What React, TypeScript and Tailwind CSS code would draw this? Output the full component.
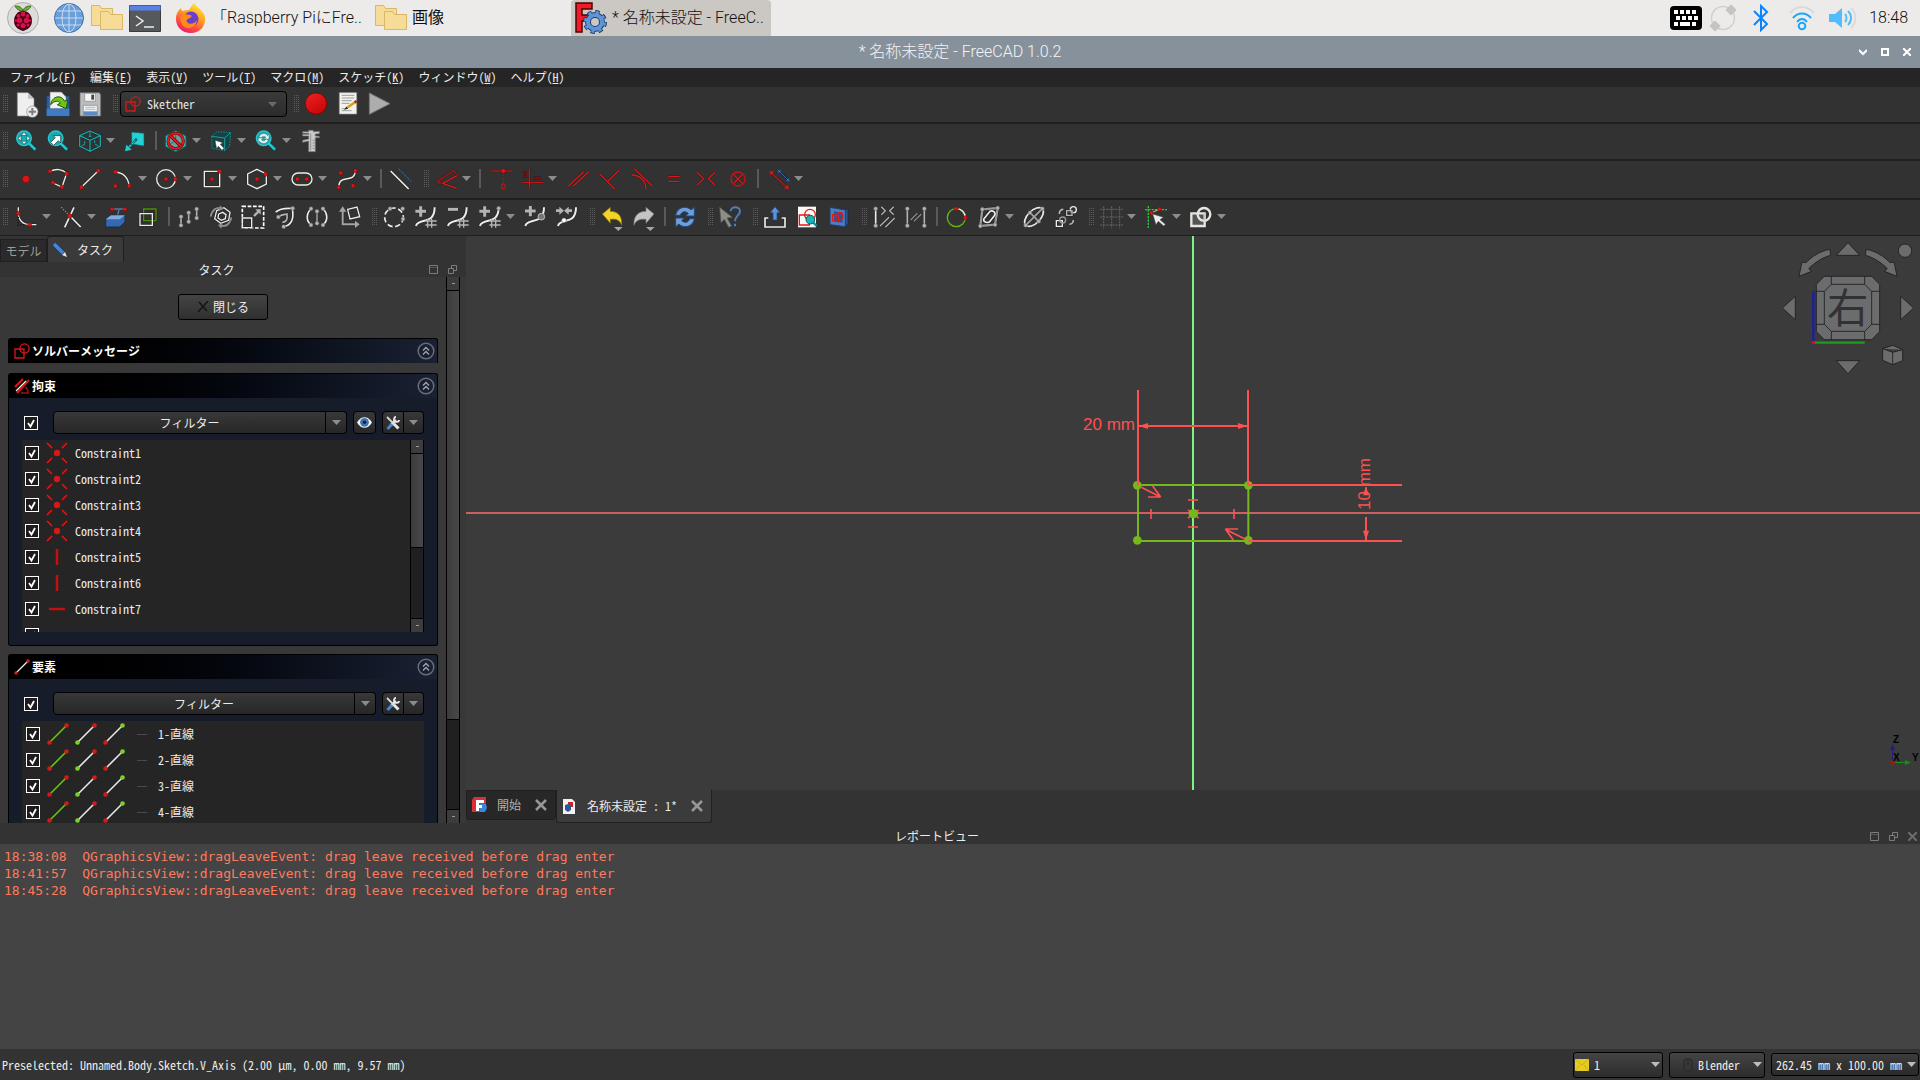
import type { ReactNode } from "react";

const RED = "#d81818";
const PALE = "#ecece8";
const GREY = "#b4b4b4";
const CYAN = "#22ccd2";

/* ---------- drawing helpers (96 units = 32 px) ---------- */

function Glyph({ x, y, children }: { x: number; y: number; children: ReactNode }) {
  return (
    <svg className="size-8 shrink-0" viewBox={`${x - 48} ${y - 48} 96 96`} fill="none" aria-hidden="true">
      {children}
    </svg>
  );
}

function L({ d, c = PALE, w = 4, dash }: { d: string; c?: string; w?: number; dash?: string }) {
  return (
    <>
      <path d={d} stroke="#161616" strokeWidth={w + 3} strokeOpacity={0.55} strokeDasharray={dash} />
      <path d={d} stroke={c} strokeWidth={w} strokeDasharray={dash} />
    </>
  );
}

function Dot({ x, y, c = RED, r = 6 }: { x: number; y: number; c?: string; r?: number }) {
  return <circle cx={x} cy={y} r={r} fill={c} stroke={c === RED ? "#6d0606" : "#555"} strokeWidth={1.5} />;
}

function Dots({ at, c, r }: { at: [number, number][]; c?: string; r?: number }) {
  return (
    <>
      {at.map(([x, y]) => (
        <Dot key={`${x}-${y}`} x={x} y={y} c={c} r={r} />
      ))}
    </>
  );
}

/* ---------- toolbar parts ---------- */

function Triangle({ className = "text-[#8c8c8c]" }: { className?: string }) {
  return (
    <svg className={`h-[5px] w-[9px] shrink-0 ${className}`} viewBox="0 0 9 5" fill="currentColor" aria-hidden="true">
      <path d="M0 0h9L4.5 5z" />
    </svg>
  );
}

function Tool({ label, menu = false, children }: { label: string; menu?: boolean; children: ReactNode }) {
  return (
    <div className="flex items-center">
      <button aria-label={label} className="size-8">
        {children}
      </button>
      {menu && (
        <button aria-label={`${label} メニュー`} className="flex h-8 w-[13px] items-center">
          <Triangle />
        </button>
      )}
    </div>
  );
}

function Grip({ first = false }: { first?: boolean }) {
  return (
    <div className={first ? "flex w-[10px] justify-end pr-px" : "flex w-[13px] justify-end"}>
      <svg className="h-[18px] w-[6px]" viewBox="0 0 6 18" stroke="#5c5c5c" strokeDasharray="1 1" aria-hidden="true">
        <path d="M.5 0v18M2.5 0v18M4.5 0v18" />
      </svg>
    </div>
  );
}

function Divider() {
  return (
    <div className="flex w-[9px] justify-center">
      <div className="h-[19px] w-[2px] bg-[#5a5a5a]" />
    </div>
  );
}

/* ---------- file and macro toolbar ---------- */

function NewDocIcon() {
  return (
    <Glyph x={48} y={48}>
      <path d="M22 14h32l18 18v52H22z" fill="#efefef" stroke="#8a8a8a" strokeWidth={2} />
      <path d="M54 14v18h18z" fill="#c2c2c2" />
      <circle cx={67} cy={71} r={17} fill="#ededed" stroke="#8a8a8a" strokeWidth={2} />
      <path d="M67 60v22M56 71h22" stroke="#7d7d7d" strokeWidth={6} />
    </Glyph>
  );
}

function OpenIcon() {
  return (
    <Glyph x={48} y={48}>
      <path d="M14 24h68v60H14z" fill="#2c5f9e" stroke="#1c3f6e" strokeWidth={2} />
      <path d="M24 62V12h34l14 14v36z" fill="#f0f0f0" stroke="#777" strokeWidth={2} />
      <path d="M14 62h68v22H14z" fill="#3f7bc4" />
      <path d="M26 50c4-26 32-32 42-10l10-4-6 26-26-12 9-4c-6-10-18-8-29 4z" fill="#6cc516" stroke="#22520a" strokeWidth={3} />
    </Glyph>
  );
}

function SaveIcon() {
  return (
    <Glyph x={48} y={48}>
      <path d="M18 14h58l4 6v64H18z" fill="#bcbcbc" stroke="#6a6a6a" strokeWidth={2} />
      <path d="M32 16h32v24H32z" fill="#f4f4f4" stroke="#888" strokeWidth={2} />
      <path d="M52 20h8v15h-8z" fill="#444" />
      <path d="M28 52h42v28H28z" fill="#eef2f8" stroke="#888" strokeWidth={2} />
      <path d="M28 70h42v12H28z" fill="#5b8cc8" />
      <path d="M34 58h30M34 64h30" stroke="#999" strokeWidth={2} />
    </Glyph>
  );
}

function SketcherIcon({ className }: { className: string }) {
  return (
    <svg className={className} viewBox="0 0 16 16" fill="none" stroke="#d81818" strokeWidth={1.3} aria-hidden="true">
      <path d="M1 6h9v9H1z" />
      <circle cx={10.5} cy={5.5} r={4.6} />
    </svg>
  );
}

function RecordIcon() {
  return (
    <Glyph x={48} y={48}>
      <defs>
        <linearGradient id="record" x1="0.2" y1="0" x2="0.8" y2="1">
          <stop offset="0" stopColor="#ee2020" />
          <stop offset="1" stopColor="#c40404" />
        </linearGradient>
      </defs>
      <circle cx={48} cy={47} r={32} fill="url(#record)" stroke="#6d0000" strokeWidth={2} />
    </Glyph>
  );
}

function MacroIcon() {
  return (
    <Glyph x={48} y={48}>
      <path d="M22 14h52v64H22z" fill="#f2f2ee" stroke="#9a9a9a" strokeWidth={2} />
      <path d="M29 22h38M29 30h38M29 38h30M29 46h24M29 62h12M29 68h30" stroke="#9d9d9d" strokeWidth={3} />
      <path d="M44 60l26-18" stroke="#d9a015" strokeWidth={8} />
      <path d="M36 65l12-3-5-6z" fill="#222" />
      <path d="M68 43l6-4" stroke="#b02020" strokeWidth={8} />
    </Glyph>
  );
}

function PlayIcon() {
  return (
    <Glyph x={48} y={48}>
      <path d="M16 15l62 32-62 32z" fill="#adadad" stroke="#747474" strokeWidth={3} />
    </Glyph>
  );
}

function FileToolbar() {
  return (
    <div className="flex h-[37px] items-center border-b-2 border-[#1f1f1f] pb-px">
      <Grip first />
      <Tool label="新規"><NewDocIcon /></Tool>
      <Tool label="開く"><OpenIcon /></Tool>
      <Tool label="保存"><SaveIcon /></Tool>
      <Grip />
      <div className="ml-px grid h-[26px] w-[167px] items-center">
        <select
          aria-label="ワークベンチ"
          className="col-start-1 row-start-1 h-[26px] w-full appearance-none rounded-sm border border-black bg-gradient-to-b from-[#3a3a3a] to-[#2c2c2c] pl-[26px] text-[#e6e6e6]"
        >
          <option>Sketcher</option>
        </select>
        <div className="pointer-events-none col-start-1 row-start-1 flex items-center justify-between pr-[10px] pl-[5px]">
          <SketcherIcon className="size-4" />
          <Triangle className="text-[#6a6a6a]" />
        </div>
      </div>
      <Grip />
      <Tool label="マクロを記録"><RecordIcon /></Tool>
      <Tool label="マクロ"><MacroIcon /></Tool>
      <Tool label="マクロを実行"><PlayIcon /></Tool>
    </div>
  );
}

/* ---------- view toolbar ---------- */

function Lens({ x, y }: { x: number; y: number }) {
  return (
    <>
      <path d={`M${x + 15} ${y + 15}l20 20`} stroke="#0a5053" strokeWidth={11} />
      <path d={`M${x + 15} ${y + 15}l19 19`} stroke={CYAN} strokeWidth={7} />
      <circle cx={x} cy={y} r={22} fill="#1aa9ae" stroke={CYAN} strokeWidth={4} />
    </>
  );
}

function ViewToolbar() {
  return (
    <div className="flex h-[37px] items-center border-b-2 border-[#1f1f1f] pb-[2px]">
      <Grip first />
      <Tool label="全てにフィット">
        <Glyph x={76} y={62}>
          <Lens x={70} y={54} />
          <path d="M70 36l8 9H62zM70 72l8-9H62zM52 54l9-8v16zM88 54l-9-8v16z" fill="#fff" stroke="#073436" strokeWidth={1.5} />
        </Glyph>
      </Tool>
      <Tool label="選択にフィット">
        <Glyph x={172} y={62}>
          <Lens x={165} y={54} />
          <path d="M150 66l14-14-6-6h22v22l-7-7-14 14z" fill="#fff" stroke="#073436" strokeWidth={2} />
        </Glyph>
      </Tool>
      <Tool label="標準ビュー" menu>
        <Glyph x={270} y={62}>
          <L d="M270 32l31 14v31l-31 16-31-16V46zM239 46l31 14 31-14M270 60v33" c="#18a4a8" />
          <path d="M270 34v14M245 77l10-6M295 77l-10-6M254 62v8M284 60v8M266 48h8" stroke="#18a4a8" strokeWidth={3} />
        </Glyph>
      </Tool>
      <Tool label="リンクに移動">
        <Glyph x={408} y={62}>
          <path d="M398 35l37 4v38l-37-6z" fill="#24d2d6" stroke="#0b6265" strokeWidth={2} />
          <path d="M412 58l-26 26" stroke="#0b6265" strokeWidth={7} />
          <path d="M412 58l-26 26" stroke={CYAN} strokeWidth={4} strokeDasharray="8 3" />
          <path d="M378 93l4-20 16 15z" fill={CYAN} />
          <circle cx={411} cy={58} r={4} fill="#0b6265" />
        </Glyph>
      </Tool>
      <Divider />
      <Tool label="表示スタイル" menu>
        <Glyph x={529} y={62}>
          <path d="M528 31l31 16v31l-31 16-31-16V47z" fill="#25bcc1" stroke="#0b6265" strokeWidth={3} />
          <circle cx={528} cy={62} r={23} fill="#6d9ea0" stroke="#6b0000" strokeWidth={9} />
          <path d="M528 40v22l20 10M528 62l-20 10" stroke="#35686a" strokeWidth={3} />
          <circle cx={528} cy={62} r={23} stroke="#e01919" strokeWidth={6} />
          <path d="M512 46l32 32" stroke="#6b0000" strokeWidth={10} />
          <path d="M512 46l32 32" stroke="#e01919" strokeWidth={6} />
        </Glyph>
      </Tool>
      <Tool label="選択" menu>
        <Glyph x={663} y={62}>
          <path d="M635 48l16-14 41 3-3 40-15 14-38-7z" fill="#174244" stroke="#15898d" strokeWidth={3} strokeDasharray="5 3" />
          <path d="M635 48l39 5 18-16M674 53v38" stroke="#1a9ea3" strokeWidth={3} />
          <path d="M645 60l24 7-8 5 11 12-6 6-11-12-5 8z" fill="#fff" stroke="#333" strokeWidth={1.5} />
        </Glyph>
      </Tool>
      <Tool label="ビューの同期" menu>
        <Glyph x={797} y={62}>
          <Lens x={790} y={54} />
          <path d="M776 50c4-12 20-14 26-4l4-4v14h-14l5-5c-5-6-12-4-14 2zM804 59c-4 12-20 14-26 4l-4 4V53h14l-5 5c5 6 12 4 14-2z" fill="#e9f4f4" stroke="#1c5c5e" strokeWidth={1} />
        </Glyph>
      </Tool>
      <Tool label="測定">
        <Glyph x={933} y={62}>
          <path d="M908 34h18v-4h14v4l18-1v7l-12 1v6l12 1v4h-12v42h-20V62l-18 4v-6l18-4v-9h-18v-5h18v-3h-18z" fill="#c9c9c9" stroke="#6e6e6e" strokeWidth={2} />
          <path d="M932 40v50M938 60h6M938 68h6M938 76h6M938 84h6" stroke="#777" strokeWidth={2} />
        </Glyph>
      </Tool>
    </div>
  );
}

/* ---------- geometry and constraint toolbar ---------- */

function GeometryToolbar() {
  return (
    <div className="flex h-[39px] items-center border-b-2 border-[#1f1f1f] pb-[2px]">
      <Grip first />
      <Tool label="点">
        <Glyph x={78} y={177}><Dot x={78} y={177} r={11} /></Glyph>
      </Tool>
      <Tool label="ポリライン">
        <Glyph x={174} y={177}>
          <L d="M150 154c18-9 38-7 50 6l-14 41-27-12" />
          <Dots at={[[150, 154], [200, 161], [186, 201], [159, 188]]} />
        </Glyph>
      </Tool>
      <Tool label="直線">
        <Glyph x={270} y={177}>
          <L d="M244 202l51-50" />
          <Dots at={[[244, 202], [295, 152]]} />
        </Glyph>
      </Tool>
      <Tool label="円弧" menu>
        <Glyph x={366} y={177}>
          <L d="M346 156c26 2 40 20 41 42" />
          <Dots at={[[346, 156], [346, 198], [387, 198]]} />
        </Glyph>
      </Tool>
      <Tool label="円" menu>
        <Glyph x={501} y={177}>
          <circle cx={498} cy={177} r={28} stroke={PALE} strokeWidth={4} />
          <Dots at={[[498, 177], [526, 177]]} />
        </Glyph>
      </Tool>
      <Tool label="長方形" menu>
        <Glyph x={636} y={177}>
          <L d="M613 154h46v46h-46z" />
          <Dots at={[[636, 177], [659, 154]]} />
        </Glyph>
      </Tool>
      <Tool label="多角形" menu>
        <Glyph x={771} y={177}>
          <L d="M771 148l28 14v30l-28 14-28-14v-30z" />
          <Dots at={[[771, 177], [797, 163]]} />
        </Glyph>
      </Tool>
      <Tool label="長円" menu>
        <Glyph x={906} y={177}>
          <rect x={876} y={159} width={60} height={36} rx={18} stroke={PALE} strokeWidth={4} />
          <Dots at={[[892, 177], [920, 177]]} />
        </Glyph>
      </Tool>
      <Tool label="B-スプライン" menu>
        <Glyph x={1041} y={177}>
          <L d="M1016 200c2-40 48-8 50-46" />
          <Dots at={[[1022, 159], [1066, 152], [1016, 202], [1059, 197]]} />
        </Glyph>
      </Tool>
      <Divider />
      <Tool label="構築ジオメトリー">
        <Glyph x={1203} y={177}>
          <L d="M1172 153l54 54" w={5} />
          <path d="M1196 147l38 38" stroke="#3a76c4" strokeWidth={3} strokeDasharray="8 4" />
        </Glyph>
      </Tool>
      <Grip />
      <Tool label="寸法拘束" menu>
        <Glyph x={48} y={177}>
          <L d="M82 166l-44 24 42 15" c="#e01919" />
          <L d="M24 184l46-32M24 190l8-14M70 150l12 16M20 182l6 8 12-1" c="#a81212" />
        </Glyph>
      </Tool>
      <Divider />
      <Tool label="一致拘束">
        <Glyph x={212} y={177}>
          <L d="M184 153h64" c="#c81414" />
          <Dot x={222} y={153} r={7} />
          <path d="M222 164v26" stroke="#a01010" strokeWidth={4} strokeDasharray="5 5" />
          <path d="M217 192h10v13h-10z" stroke="#c81414" strokeWidth={3} />
        </Glyph>
      </Tool>
      <Tool label="水平/垂直拘束" menu>
        <Glyph x={309} y={177}>
          <L d="M280 188h64M301 146v62" c="#c81414" />
          <L d="M285 156h6v14h-6zM316 172h18v4h-18z" c="#8d0d0d" w={3} />
        </Glyph>
      </Tool>
      <Tool label="平行拘束">
        <Glyph x={444} y={177}><L d="M418 199l46-44M433 199l46-44" c={RED} /></Glyph>
      </Tool>
      <Tool label="直角拘束">
        <Glyph x={540} y={177}><L d="M513 163l44 44M535 185l36-34" c={RED} /></Glyph>
      </Tool>
      <Tool label="正接拘束">
        <Glyph x={636} y={177}>
          <L d="M616 146l54 52" c={RED} />
          <L d="M608 165c24 0 44 18 42 42" c={RED} />
        </Glyph>
      </Tool>
      <Tool label="等値拘束">
        <Glyph x={732} y={177}><L d="M718 170h34M718 184h34" c={RED} /></Glyph>
      </Tool>
      <Tool label="対称拘束">
        <Glyph x={828} y={177}><L d="M804 157l20 19-20 19M858 157l-20 19 20 19" c={RED} /></Glyph>
      </Tool>
      <Tool label="ブロック拘束">
        <Glyph x={924} y={177}>
          <circle cx={927} cy={177} r={21} stroke="#c81414" strokeWidth={4} />
          <L d="M913 163l28 28M941 163l-28 28" c={RED} />
        </Glyph>
      </Tool>
      <Divider />
      <Tool label="拘束の切り替え" menu>
        <Glyph x={1044} y={177}>
          <L d="M1020 154l54 52" c="#c81414" />
          <path d="M1018 152l14 3-10 11zM1077 208l-14-3 10-11z" fill={RED} />
          <L d="M1046 152l30 30" c="#3a68b0" w={3} />
          <path d="M1043 149l11 3-8 8zM1079 185l-11-3 8-8z" fill="#3a68b0" />
        </Glyph>
      </Tool>
    </div>
  );
}

/* ---------- edit toolbar ---------- */

function SpringTool({ x, sign, dot }: { x: number; sign: "+" | "-"; dot?: boolean }) {
  const s = sign === "+" ? `M${x - 32} 274h32M${x - 16} 259v31` : `M${x - 30} 268h30`;
  return (
    <Glyph x={x} y={291}>
      <L d={s} c={GREY} w={9} />
      <L d={`M${x - 30} 318c6-26 56 0 56-56`} w={6} />
      <path d={`M${x + 5} 296v27M${x + 17} 296v27M${x - 2} 303h34M${x - 2} 315h34`} stroke={GREY} strokeWidth={4} />
      {dot && <Dot x={x + 26} y={265} c={GREY} r={6} />}
    </Glyph>
  );
}

function EditToolbar() {
  return (
    <div className="flex h-9 items-center border-b border-[#1f1f1f] pb-[2px]">
      <Grip first />
      <Tool label="フィレット" menu>
        <Glyph x={78} y={291}>
          <L d="M55 262v18c0 20 14 34 34 34h20" />
          <path d="M55 290v28M61 314h18" stroke="#111" strokeWidth={4} strokeDasharray="4 4" />
          <Dots at={[[55, 280], [89, 314]]} />
        </Glyph>
      </Tool>
      <Tool label="トリム" menu>
        <Glyph x={213} y={291}>
          <L d="M222 262l-28 60M210 288l32 33" w={5} />
          <path d="M184 262l22 22" stroke="#999" strokeWidth={4} strokeDasharray="3 5" />
          <Dot x={209} y={288} r={7} />
        </Glyph>
      </Tool>
      <Tool label="外部ジオメトリー">
        <Glyph x={347} y={291}>
          <path d="M316 298l16-12h42v20l-16 15h-42z" fill="#3568ae" stroke="#142b4e" strokeWidth={3} />
          <path d="M316 298l16-12h42l-16 12z" fill="#7eaae2" />
          <path d="M336 267h38M352 284l4-14" stroke="#6b9bd8" strokeWidth={3} />
          <Dots at={[[335, 267], [374, 267]]} />
        </Glyph>
      </Tool>
      <Tool label="カーボンコピー">
        <Glyph x={444} y={291}>
          <L d="M431 267h37v35h-37z" c="#4c9407" />
          <L d="M420 281h37v35h-37z" />
        </Glyph>
      </Tool>
      <Divider />
      <Tool label="移動/配列">
        <Glyph x={567} y={291}>
          <L d="M543 290v26M566 279v26M590 268v26" c={GREY} w={5} />
          <Dots c={GREY} at={[[543, 290], [543, 316], [566, 278], [566, 305], [590, 267], [590, 294]]} />
        </Glyph>
      </Tool>
      <Tool label="回転">
        <Glyph x={663} y={291}>
          <L d="M632 290c4-20 16-30 34-24M694 292c-4 20-16 30-34 24" c="#8e8e8e" w={6} />
          <L d="M650 272l22-9 18 14-4 24-24 9-18-14z" />
          <L d="M656 282l12-5 10 7-2 12-12 5-10-7z" />
          <path d="M660 256l10 11-14 6zM664 326l-10-11 14-6z" fill="#8e8e8e" />
        </Glyph>
      </Tool>
      <Tool label="拡大縮小">
        <Glyph x={759} y={291}>
          <path d="M727 259h64v65h-64z" stroke="#fff" strokeWidth={5} strokeDasharray="11 5" />
          <L d="M727 294h28v29h-28z" />
          <path d="M762 288l14-14" stroke={GREY} strokeWidth={7} />
          <path d="M782 268v16l-16-16z" fill={GREY} />
        </Glyph>
      </Tool>
      <Tool label="オフセット">
        <Glyph x={854} y={291}>
          <L d="M826 276c18-14 34-10 50-11 6 34-4 52-27 55" w={5} />
          <L d="M836 290c10-9 18-6 24-8 2 18-2 24-14 25" c={GREY} w={5} />
          <Dots c={GREY} at={[[877, 265], [834, 291], [850, 320]]} />
        </Glyph>
      </Tool>
      <Tool label="対称">
        <Glyph x={950} y={291}>
          <L d="M936 265c-20 12-20 40-2 50M964 265c20 12 20 40 2 50" w={5} />
          <L d="M950 276v32" c={GREY} />
          <Dots c={GREY} at={[[932, 266], [968, 266], [932, 315], [968, 315], [950, 274], [950, 310]]} />
        </Glyph>
      </Tool>
      <Tool label="軸の整列を削除">
        <Glyph x={1046} y={291}>
          <L d="M1042 268l28-7 8 29-29 7z" />
          <L d="M1027 270v43h40" c="#a4a4a4" w={6} />
          <path d="M1016 275l11-16 11 16zM1064 302l14 11-14 11z" fill="#a4a4a4" />
        </Glyph>
      </Tool>
      <Grip />
      <Tool label="B-スプラインに変換">
        <Glyph x={1181} y={291}>
          <circle cx={1181} cy={292} r={28} stroke={PALE} strokeWidth={5} strokeDasharray="16 8" />
          <Dots c={GREY} at={[[1169, 266], [1207, 266], [1208, 297]]} />
        </Glyph>
      </Tool>
      <Tool label="次数を増やす"><SpringTool x={88} sign="+" /></Tool>
      <Tool label="次数を減らす"><SpringTool x={84} sign="-" /></Tool>
      <Tool label="多重度を増やす" menu><SpringTool x={181} sign="+" dot /></Tool>
      <Tool label="ノットを挿入">
        <Glyph x={315} y={291}>
          <L d="M285 273h32M301 258v31" c={GREY} w={9} />
          <L d="M286 318c6-26 56 0 56-56" w={6} />
          <circle cx={334} cy={290} r={10} fill="#777" stroke="#bbb" strokeWidth={3} />
        </Glyph>
      </Tool>
      <Tool label="曲線を結合">
        <Glyph x={411} y={291}>
          <L d="M384 318c6-26 54 0 54-56" w={6} />
          <path d="M378 268h10v-8l14 12-14 12v-8h-10zM426 268h-10v-8l-14 12 14 12v-8h10z" fill={GREY} />
          <Dot x={402} y={301} c="#fff" r={7} />
        </Glyph>
      </Tool>
      <Grip />
      <Tool label="元に戻す">
        <Glyph x={546} y={291}>
          <path d="M517 282l24-20v12c26 0 36 18 34 42-6-16-16-20-34-18v12z" fill="#f2d32a" stroke="#7d6a00" strokeWidth={2} />
          <path d="M552 321h26l-13 12z" fill="#a6a6a6" />
        </Glyph>
      </Tool>
      <Tool label="やり直す">
        <Glyph x={642} y={291}>
          <path d="M672 282l-24-20v12c-26 0-38 18-36 42 6-16 18-20 36-18v12z" fill="#c4c4c4" stroke="#777" strokeWidth={2} />
          <path d="M648 321h26l-13 12z" fill="#a6a6a6" />
        </Glyph>
      </Tool>
      <Divider />
      <Tool label="更新">
        <Glyph x={765} y={291}>
          <path d="M737 286c4-26 34-30 46-16l10-8v26h-26l8-8c-10-8-20-6-24 6zM793 296c-4 26-34 30-46 16l-10 8v-26h26l-8 8c10 8 20 6 24-6z" fill="#6c9fdc" stroke="#1f4a80" strokeWidth={3} />
        </Glyph>
      </Tool>
      <Grip />
      <Tool label="これは何?">
        <Glyph x={900} y={291}>
          <path d="M869 262l38 30-16 2 14 24-9 4-13-24-10 10z" fill="#8a8f88" stroke="#555" strokeWidth={2} />
          <path d="M902 274c0-16 28-16 28 0 0 12-15 13-15 30M915 311v8" stroke="#4c7fbd" strokeWidth={6} />
        </Glyph>
      </Tool>
      <Grip />
      <Tool label="スケッチを終了">
        <Glyph x={1035} y={291}>
          <L d="M1015 294h-10v27h60v-27h-10" w={5} />
          <path d="M1035 260l15 18h-9v22h-12v-22h-9z" fill="#5d92d6" stroke="#1d4379" strokeWidth={2} />
        </Glyph>
      </Tool>
      <Tool label="スケッチを表示">
        <Glyph x={1131} y={291}>
          <path d="M1104 260h54v62h-54z" fill="#fafafa" />
          <path d="M1108 285h30v30h-30z" stroke="#e01919" strokeWidth={4} />
          <circle cx={1140} cy={284} r={16} stroke="#e01919" strokeWidth={4} />
          <path d="M1148 306l12 12" stroke="#0c8f93" strokeWidth={7} />
          <circle cx={1141} cy={299} r={13} fill="#19b4b8" stroke="#0a5f62" strokeWidth={3} />
        </Glyph>
      </Tool>
      <Tool label="セクションを表示">
        <Glyph x={1227} y={291}>
          <path d="M1214 268h40v44l-10 8-30-6z" fill="#2c5590" stroke="#132c52" strokeWidth={2} />
          <path d="M1200 262l46 8v50l-46-6z" fill="#4b7fc2" stroke="#1d3e70" strokeWidth={3} />
          <path d="M1212 274l26 4v30l-26-4z" fill="#2c5590" />
          <path d="M1208 284l18 3v18l-18-3z" stroke="#e01919" strokeWidth={4} />
          <ellipse cx={1230} cy={288} rx={9} ry={11} stroke="#e01919" strokeWidth={4} />
        </Glyph>
      </Tool>
      <Grip />
      <Tool label="拘束と要素を選択">
        <Glyph x={102} y={291}>
          <L d="M77 268v50" w={5} />
          <Dots c={GREY} at={[[77, 266], [77, 317]]} />
          <L d="M94 260l12 12-12 12M131 260l-12 12 12 12" c={GREY} />
          <L d="M90 318l27-26M106 322l28-28" c={GREY} />
        </Glyph>
      </Tool>
      <Tool label="関連する拘束を選択">
        <Glyph x={198} y={291}>
          <L d="M172 268v50M223 268v50" c={GREY} w={5} />
          <L d="M182 300l20-20M192 304l22-22" c="#8a8a8a" />
          <Dots c={GREY} at={[[172, 266], [172, 317], [223, 266], [223, 317]]} />
        </Glyph>
      </Tool>
      <Divider />
      <Tool label="自由度を選択">
        <Glyph x={321} y={291}>
          <circle cx={319} cy={293} r={27} stroke="#62b80c" strokeWidth={4} />
          <path d="M319 266a27 27 0 0 1 27 27" stroke="#eee" strokeWidth={4} />
          <Dots at={[[319, 266], [346, 293]]} />
        </Glyph>
      </Tool>
      <Tool label="内部ジオメトリー" menu>
        <Glyph x={417} y={291}>
          <L d="M397 268l46-4-8 50-44 4z" c="#9a9a9a" w={7} />
          <L d="M402 296l18-22c8-4 18 2 14 12l-16 20c-10 4-20-2-16-10z" w={5} />
          <Dots c={GREY} at={[[397, 268], [443, 264], [435, 314], [391, 318]]} />
        </Glyph>
      </Tool>
      <Tool label="コントロールポイント">
        <Glyph x={552} y={291}>
          <ellipse cx={552} cy={291} rx={35} ry={19} transform="rotate(-45 552 291)" stroke={PALE} strokeWidth={5} />
          <L d="M527 316l50-50M540 278l26 26" c="#a0a0a0" w={6} />
          <Dots c={GREY} at={[[527, 316], [577, 266], [540, 278], [566, 304]]} />
        </Glyph>
      </Tool>
      <Tool label="仮想スペースを切り替え">
        <Glyph x={648} y={291}>
          <L d="M619 302h18v17h-18z" />
          <circle cx={670} cy={269} r={9} stroke={PALE} strokeWidth={4} />
          <L d="M650 272h16v14h-16z" c={GREY} />
          <circle cx={638} cy={300} r={9} stroke="#999" strokeWidth={4} />
          <L d="M628 282c0-10 4-14 12-14M670 300c0 8-4 12-12 13" w={5} c={GREY} />
        </Glyph>
      </Tool>
      <Grip />
      <Tool label="グリッド" menu>
        <Glyph x={782} y={291}>
          <path d="M760 259v66M784 259v66M808 259v66M750 268h68M750 291h68M750 315h68" stroke="#686868" strokeWidth={3} strokeDasharray="6 3" />
        </Glyph>
      </Tool>
      <Tool label="スナップ" menu>
        <Glyph x={918} y={291}>
          <path d="M895 258v66M885 269h66" stroke="#22c93c" strokeWidth={4} strokeDasharray="7 3" />
          <path d="M904 279l24-12" stroke="#7ed957" strokeWidth={4} />
          <Dots at={[[904, 279], [929, 267]]} />
          <path d="M908 282l32 10-10 7 16 14-5 5-16-14-7 10z" fill="#ececec" stroke="#444" strokeWidth={1.5} />
        </Glyph>
      </Tool>
      <Tool label="描画順序" menu>
        <Glyph x={1053} y={291}>
          <path d="M1024 280h40v38h-40z" fill="#555" stroke="#e6e6e2" strokeWidth={7} />
          <circle cx={1062} cy={283} r={19} stroke="#e6e6e2" strokeWidth={7} />
          <path d="M1064 280v22" stroke="#c8c8c4" strokeWidth={4} />
        </Glyph>
      </Tool>
    </div>
  );
}

/* ---------- desktop panel ---------- */

function FolderIcon() {
  return (
    <svg className="size-8 shrink-0" viewBox="0 0 32 32" fill="#f6dc96" stroke="#d9b765" aria-hidden="true">
      <path d="M.5 3.5h8l2 3h11v17H.5z" />
      <path d="M9.5 9.5h8l2 3h12v15h-22z" />
    </svg>
  );
}

function DesktopPanel() {
  return (
    <header className="flex h-9 items-center bg-[#edebe9] font-['Roboto','Noto_Sans_CJK_JP',sans-serif] text-[16px] font-light text-[#101010]">
      <button aria-label="メニュー" className="ml-[7px] size-8">
        <svg className="size-8" viewBox="0 0 32 32" aria-hidden="true">
          <circle cx={16} cy={16} r={15.5} fill="#dcdcdc" stroke="#aeaeae" />
          <path d="M16 9C11 9 9 6 8 4c4 0 7 1 8 5 1-4 4-5 8-5-1 2-3 5-8 5z" fill="#6cb32e" stroke="#2c5c10" strokeWidth={0.8} />
          <path d="M16 9c6 0 9 5 9 10 0 6-5 9-9 10-4-1-9-4-9-10C7 14 10 9 16 9z" fill="#4a0014" />
          <g fill="#d3114a">
            <circle cx={16} cy={12} r={2.4} />
            <circle cx={11.5} cy={14} r={2} />
            <circle cx={20.5} cy={14} r={2} />
            <circle cx={12.5} cy={18.5} r={2.8} />
            <circle cx={19.5} cy={18.5} r={2.8} />
            <circle cx={8.8} cy={18.5} r={1.3} />
            <circle cx={23.2} cy={18.5} r={1.3} />
            <circle cx={16} cy={23.5} r={2.6} />
            <circle cx={11} cy={23} r={1.5} />
            <circle cx={21} cy={23} r={1.5} />
          </g>
        </svg>
      </button>
      <button aria-label="ブラウザー" className="ml-[14px] size-8">
        <svg className="size-8" viewBox="0 0 32 32" fill="none" stroke="#c9dcf1" aria-hidden="true">
          <circle cx={16} cy={16} r={14.5} fill="#6b9fdb" stroke="#3d6ea8" />
          <ellipse cx={16} cy={16} rx={7} ry={14} />
          <path d="M16 2v28M2 16h28M4 9h24M4 23h24" />
        </svg>
      </button>
      <button aria-label="ファイルマネージャー" className="ml-[6px] size-8"><FolderIcon /></button>
      <button aria-label="ターミナル" className="ml-[6px] size-8">
        <svg className="size-8" viewBox="0 0 32 32" fill="none" aria-hidden="true">
          <path d="M.5 3.5h31v26H.5z" fill="#56595c" stroke="#393c3e" />
          <path d="M.5 3.5h31v5H.5z" fill="#5a82e6" />
          <path d="M7 14l7 5-7 5M15 25h10" stroke="#ececec" strokeWidth={1.5} />
        </svg>
      </button>
      <button className="ml-[10px] flex w-[200px] items-center gap-1 overflow-hidden pl-1 whitespace-nowrap">
        <svg className="size-8 shrink-0" viewBox="0 0 32 32" aria-hidden="true">
          <defs>
            <linearGradient id="fox" x1="0.8" y1="0" x2="0.3" y2="1">
              <stop offset="0" stopColor="#fff04a" />
              <stop offset="0.45" stopColor="#ff9a1f" />
              <stop offset="0.8" stopColor="#ff3f4a" />
              <stop offset="1" stopColor="#e2226f" />
            </linearGradient>
          </defs>
          <path d="M1 17C1 11 4 8 6 6c0 2 1 3 2 3 2-1 4-1 6-1 2-3 3-6 6-7 0 4 8 6 10 14 1 9-5 16-14 16S1 25 1 17z" fill="url(#fox)" />
          <circle cx={16} cy={17} r={7.5} fill="#6a3fd0" />
          <path d="M6 13c3-2 6 0 9 0 2 0 2 2 0 3-3 1-4 2-3 4 2 3 8 2 10-2-1 6-5 8-9 8-5 0-9-6-7-13z" fill="#ff8a1c" />
        </svg>
        「Raspberry PiにFre..
      </button>
      <button className="flex w-[200px] items-center gap-[5px] pl-1 font-normal"><FolderIcon />画像</button>
      <button className="flex h-9 w-[200px] items-center gap-[5px] overflow-hidden rounded-t-sm bg-[#cbc7c3] pl-1 whitespace-nowrap">
        <svg className="size-8 shrink-0" viewBox="0 0 32 32" aria-hidden="true">
          <path d="M1 1h16v6H7v6h6v6H7v11H1z" fill="#ee1c24" stroke="#4a0206" strokeWidth={1.5} />
          <circle cx={20} cy={20} r={7} fill="none" stroke="#1d3f6e" strokeWidth={6} />
          <circle cx={20} cy={20} r={9.5} fill="none" stroke="#1d3f6e" strokeWidth={5} strokeDasharray="4 3.46" />
          <circle cx={20} cy={20} r={9.5} fill="none" stroke="#5f95d6" strokeWidth={3} strokeDasharray="3 4.46" strokeDashoffset={-0.5} />
          <circle cx={20} cy={20} r={7} fill="none" stroke="#5f95d6" strokeWidth={4} />
        </svg>
        * 名称未設定 - FreeC..
      </button>
      <div className="ml-auto flex items-center pr-3">
        <svg className="h-6 w-8" viewBox="0 0 32 24" aria-label="キーボード">
          <rect width={32} height={24} rx={4} fill="#000" />
          <path d="M4 6h22M6 12h22M4 18h4M22 18h4" stroke="#fff" strokeWidth={4} strokeDasharray="4 2" />
          <path d="M10 18h10" stroke="#fff" strokeWidth={4} />
        </svg>
        <svg className="ml-[7px] size-7" viewBox="0 0 28 28" fill="none" aria-label="同期">
          <circle cx={14} cy={14} r={11.5} stroke="#d2d0ce" strokeWidth={1.5} />
          <rect x={18} y={2} width={8} height={8} rx={1} transform="rotate(45 22 6)" fill="#c6c4c2" />
          <rect x={2} y={18} width={8} height={8} rx={1} transform="rotate(45 6 22)" fill="#c6c4c2" />
        </svg>
        <svg className="ml-4 h-7 w-4" viewBox="0 0 16 28" fill="none" stroke="#0a84ff" strokeWidth={2} aria-label="Bluetooth">
          <path d="M1 7l13 13-6 6V2l6 6L1 21" />
        </svg>
        <svg className="ml-[19px] size-7" viewBox="0 0 28 28" fill="none" stroke="#1ea5fb" strokeWidth={2} aria-label="Wi-Fi">
          <path d="M2 9c7-8 17-8 24 0" stroke="#dcdad8" />
          <path d="M5 14c5-6 13-6 18 0M9 18c3-4 7-4 10 0" />
          <circle cx={14} cy={22} r={3.3} />
        </svg>
        <svg className="ml-3 size-7" viewBox="0 0 28 28" fill="none" strokeWidth={2} aria-label="音量">
          <path d="M1 10h6l7-6v20l-7-6H1z" fill="#52bdfb" />
          <path d="M17 10c2 2 2 6 0 8M20 7c4 4 4 10 0 14" stroke="#52bdfb" />
          <path d="M23 4c6 6 6 14 0 20" stroke="#dcdad8" />
        </svg>
        <time className="ml-[13px]">18:48</time>
      </div>
    </header>
  );
}

function TitleBar() {
  return (
    <div className="grid h-8 grid-cols-[1fr_auto_1fr] items-center bg-[#87919b] font-['Roboto','Noto_Sans_CJK_JP',sans-serif] text-[16px] font-light text-[#f4f4f4]">
      <h1 className="col-start-2">* 名称未設定 - FreeCAD 1.0.2</h1>
      <div className="flex justify-end gap-[14px] pr-[9px]">
        <button aria-label="最小化" className="h-2">
          <svg className="size-2" viewBox="0 0 8 8" fill="none" stroke="#fff" strokeWidth={2} aria-hidden="true"><path d="M0 2l4 4 4-4" /></svg>
        </button>
        <button aria-label="最大化" className="h-2">
          <svg className="size-2" viewBox="0 0 8 8" fill="none" stroke="#fff" strokeWidth={2} aria-hidden="true"><path d="M1 1h6v6H1z" /></svg>
        </button>
        <button aria-label="閉じる" className="h-2">
          <svg className="size-2" viewBox="0 0 8 8" fill="none" stroke="#fff" strokeWidth={2} aria-hidden="true"><path d="M0 0l8 8M8 0L0 8" /></svg>
        </button>
      </div>
    </div>
  );
}

const menus: [string, string][] = [
  ["ファイル", "F"],
  ["編集", "E"],
  ["表示", "V"],
  ["ツール", "T"],
  ["マクロ", "M"],
  ["スケッチ", "K"],
  ["ウィンドウ", "W"],
  ["ヘルプ", "H"],
];

function MenuBar() {
  return (
    <nav className="flex h-[19px] items-start gap-[14px] bg-[#252525] pl-[10px]">
      {menus.map(([name, key]) => (
        <button key={name} className="leading-[18px]">
          {name}(<u>{key}</u>)
        </button>
      ))}
    </nav>
  );
}

/* ---------- task panel ---------- */

function Check({ label }: { label: string }) {
  return (
    <span className="grid size-[14px] shrink-0">
      <input
        type="checkbox"
        defaultChecked
        aria-label={label}
        className="peer col-start-1 row-start-1 size-[14px] appearance-none border border-white bg-[#1c1c1c]"
      />
      <svg className="pointer-events-none col-start-1 row-start-1 hidden size-[14px] peer-checked:block" viewBox="0 0 14 14" fill="none" stroke="#fff" strokeWidth={1.8} aria-hidden="true">
        <path d="M4 7l2.5 3.5L10 4" />
      </svg>
    </span>
  );
}

function FloatButtons({ close = false }: { close?: boolean }) {
  return (
    <div className="flex gap-[10px] text-[#7c7c7c]">
      <button aria-label="折りたたむ">
        <svg className="size-[9px]" viewBox="0 0 9 9" fill="none" stroke="currentColor" aria-hidden="true">
          <path d="M.5.5h8v8h-8z" />
          <path d="M1 2.5h7" stroke="#565656" />
        </svg>
      </button>
      <button aria-label="フロート">
        <svg className="size-[9px]" viewBox="0 0 9 9" fill="none" stroke="currentColor" aria-hidden="true"><path d="M.5 3.5h5v5h-5zM3.5 3V.5h5v5H6" /></svg>
      </button>
      {close && (
        <button aria-label="閉じる">
          <svg className="size-[9px]" viewBox="0 0 9 9" fill="none" stroke="#6c6c6c" strokeWidth={2} aria-hidden="true"><path d="M0 0l9 9M9 0L0 9" /></svg>
        </button>
      )}
    </div>
  );
}

function ScrollBar({ thumb }: { thumb: string }) {
  return (
    <div className="flex w-[14px] shrink-0 flex-col border-x border-black bg-[#202020]">
      <button aria-label="上へスクロール" className="flex h-[14px] shrink-0 items-center justify-center border-b border-black bg-[#3c3c3c]">
        <span className="h-px w-[3px] bg-[#999]" />
      </button>
      <div className={`border-b border-black bg-gradient-to-r from-[#3c3c3c] to-[#484848] ${thumb}`} />
      <button aria-label="下へスクロール" className="mt-auto flex h-[14px] shrink-0 items-center justify-center border-t border-black bg-[#3c3c3c]">
        <span className="h-px w-[3px] bg-[#999]" />
      </button>
    </div>
  );
}

function GroupHeader({ icon, title }: { icon: ReactNode; title: string }) {
  return (
    <div className="flex h-[25px] shrink-0 items-center gap-[2px] rounded-t-[3px] border border-b-0 border-black bg-gradient-to-r from-black to-[#1a2133] pr-[2px] pl-[5px]">
      {icon}
      <h2 className="grow font-bold text-white">{title}</h2>
      <button aria-label={`${title}を折りたたむ`}>
        <svg className="size-[18px]" viewBox="0 0 18 18" fill="none" aria-hidden="true">
          <circle cx={9} cy={9} r={7.8} stroke="#6a6d78" strokeWidth={1.5} />
          <path d="M6 8.5l3-3 3 3M6 12.5l3-3 3 3" stroke="#a4a6b0" strokeWidth={1.3} />
        </svg>
      </button>
    </div>
  );
}

const box = "flex h-[23px] items-center justify-center border border-black bg-gradient-to-b from-[#383838] to-[#272727]";

function FilterRow({ eye = false }: { eye?: boolean }) {
  return (
    <div className="flex items-center pr-[13px] pl-[15px]">
      <Check label="すべて" />
      <div className="ml-[15px] flex grow">
        <button className={`${box} grow rounded-l-sm`}>フィルター</button>
        <button aria-label="フィルター メニュー" className={`${box} w-[21px] rounded-r-sm border-l-0`}><Triangle /></button>
      </div>
      {eye && (
        <button aria-label="表示" className={`${box} ml-[6px] w-[23px] rounded-sm`}>
          <svg className="h-[11px] w-[15px]" viewBox="0 0 15 11" aria-hidden="true">
            <path d="M0 5.5C4-1.5 11-1.5 15 5.5 11 12.5 4 12.5 0 5.5z" fill="#f3f3f3" />
            <circle cx={7.5} cy={5.3} r={4.4} fill="#3d74b8" />
            <circle cx={7.5} cy={5.3} r={1.8} fill="#11243f" />
          </svg>
        </button>
      )}
      <div className="ml-[6px] flex">
        <button aria-label="設定" className={`${box} w-[22px] rounded-l-sm`}>
          <svg className="size-[14px]" viewBox="0 0 14 14" fill="none" aria-hidden="true">
            <path d="M1 1l8 8" stroke="#d8d8d8" strokeWidth={1.8} />
            <path d="M8 8l4.5 4.5" stroke="#e8e8e8" strokeWidth={3} />
            <path d="M10 4L5 9" stroke="#e0e0e0" strokeWidth={2.5} />
            <path d="M6 8l-4.5 5" stroke="#4c86cf" strokeWidth={3} />
            <path d="M13 4c0 2-4 3-5 0M10 1c-2 0-3 3-1 5" stroke="#e8e8e8" strokeWidth={1.8} />
          </svg>
        </button>
        <button aria-label="設定 メニュー" className={`${box} w-5 rounded-r-sm border-l-0`}><Triangle /></button>
      </div>
    </div>
  );
}

type Kind = "coincident" | "vertical" | "horizontal";

function ConstraintIcon({ kind }: { kind: Kind }) {
  return (
    <svg className="size-[22px] shrink-0" viewBox="0 0 22 22" aria-hidden="true">
      {kind === "coincident" && (
        <>
          <path d="M1 1l5 5M21 1l-5 5M1 21l5-5M21 21l-5-5" stroke="#7d0808" strokeWidth={2.4} />
          <path d="M1 1l5 5M21 1l-5 5M1 21l5-5M21 21l-5-5" stroke="#e01c1c" strokeWidth={1.2} />
          <circle cx={11} cy={11} r={3.2} fill="#d81818" />
        </>
      )}
      {kind === "vertical" && <path d="M11 3v16" stroke="#c41010" strokeWidth={2.5} />}
      {kind === "horizontal" && <path d="M3 11h16" stroke="#c41010" strokeWidth={2.5} />}
    </svg>
  );
}

const constraints: [string, Kind][] = [
  ["Constraint1", "coincident"],
  ["Constraint2", "coincident"],
  ["Constraint3", "coincident"],
  ["Constraint4", "coincident"],
  ["Constraint5", "vertical"],
  ["Constraint6", "vertical"],
  ["Constraint7", "horizontal"],
];

const GREEN = "#7ed321";

function Segment({ line, start, end }: { line: string; start: string; end: string }) {
  return (
    <svg className="size-[22px]" viewBox="0 0 22 22" aria-hidden="true">
      <path d="M2 20L20 2" stroke={line} strokeWidth={1.6} />
      <circle cx={2.5} cy={19.5} r={2.3} fill={start} />
      <circle cx={19.5} cy={2.5} r={2.3} fill={end} />
    </svg>
  );
}

const elements = ["1-直線", "2-直線", "3-直線", "4-直線"];

function TaskPanel() {
  return (
    <aside className="flex w-[466px] shrink-0 flex-col bg-[#333]">
      <div className="flex h-[26px] shrink-0 items-end" role="tablist">
        <button role="tab" aria-selected="false" className="h-[23px] w-[47px] border border-[#1f1f1f] bg-[#2a2a2a] text-[#9c9c9c]">モデル</button>
        <button role="tab" aria-selected="true" className="flex h-[26px] w-[77px] items-center gap-[9px] rounded-t-[3px] border border-b-0 border-[#1f1f1f] bg-[#3a3a3a] pl-1">
          <svg className="size-4" viewBox="0 0 16 16" fill="none" aria-hidden="true">
            <path d="M2 2l10 10" stroke="#1b3d6b" strokeWidth={5.5} />
            <path d="M2 2l9 9" stroke="#4a84cd" strokeWidth={3.5} />
            <path d="M10 13l3-3 2 5z" fill="#f0e6c8" />
          </svg>
          タスク
        </button>
      </div>
      <div className="flex h-[15px] shrink-0 items-center pr-[9px]">
        <div className="grow pl-1 text-center leading-[15px]">タスク</div>
        <FloatButtons />
      </div>
      <div className="flex min-h-0 grow bg-[#383838] pr-[6px]">
        <div className="flex min-w-0 grow flex-col overflow-hidden pr-2 pl-2">
          <button className="mt-[17px] flex h-[26px] w-[90px] shrink-0 items-center justify-center gap-1 self-center rounded-[3px] border border-black bg-gradient-to-b from-[#444] to-[#303030]">
            <svg className="size-3" viewBox="0 0 12 12" fill="none" stroke="#141414" strokeWidth={1.5} aria-hidden="true"><path d="M2 1l8 9M11 0L1 11" /></svg>
            閉じる
          </button>
          <section className="mt-[18px] flex shrink-0 flex-col">
            <GroupHeader icon={<SketcherIcon className="size-4" />} title="ソルバーメッセージ" />
          </section>
          <section className="mt-[10px] flex shrink-0 flex-col">
            <GroupHeader
              title="拘束"
              icon={
                <svg className="size-4" viewBox="0 0 16 16" fill="none" aria-hidden="true">
                  <path d="M1 9l8-8M3 15L15 2" stroke="#d81818" strokeWidth={2.2} />
                  <path d="M2 13L12 3" stroke="#f0f0f0" strokeWidth={1.3} />
                  <path d="M7 15h8M14 15c0-3-1-5-3-6" stroke="#a01010" strokeWidth={1.5} />
                </svg>
              }
            />
            <div className="flex h-[248px] flex-col rounded-b-[3px] border border-t-0 border-black bg-[#161c2a] pt-[13px] pb-[13px]">
              <FilterRow eye />
              <div className="mt-[6px] mr-[13px] ml-[13px] flex min-h-0 grow bg-[#252525]">
                <ul className="grow overflow-hidden">
                  {constraints.map(([name, kind]) => (
                    <li key={name} className="flex h-[26px] items-center pl-[3px]">
                      <Check label={name} />
                      <span className="ml-[7px] flex"><ConstraintIcon kind={kind} /></span>
                      <span className="ml-[7px]">{name}</span>
                    </li>
                  ))}
                  <li className="flex h-[26px] items-center pl-[3px]"><Check label="Constraint8" /></li>
                </ul>
                <ScrollBar thumb="h-[94px]" />
              </div>
            </div>
          </section>
          <section className="mt-2 flex min-h-0 grow flex-col">
            <GroupHeader
              title="要素"
              icon={
                <svg className="size-4" viewBox="0 0 16 16" aria-hidden="true">
                  <path d="M2 14L14 2" stroke="#f0f0f0" strokeWidth={1.3} />
                  <circle cx={2} cy={14} r={1.8} fill="#d81818" />
                  <circle cx={14} cy={2} r={1.8} fill="#d81818" />
                </svg>
              }
            />
            <div className="flex min-h-0 grow flex-col border-x border-black bg-[#161c2a] pt-[13px]">
              <FilterRow />
              <ul className="mt-[6px] mr-[13px] ml-[13px] min-h-0 grow overflow-hidden bg-[#252525]">
                {elements.map((name) => (
                  <li key={name} className="flex h-[26px] items-center pl-1">
                    <Check label={name} />
                    <span className="ml-[7px] flex gap-[6px]">
                      <Segment line="#6cc414" start={RED} end={RED} />
                      <Segment line="#e8e8e8" start={GREEN} end={RED} />
                      <Segment line="#e8e8e8" start={RED} end={GREEN} />
                    </span>
                    <span className="ml-3 h-px w-[10px] bg-[#4a4a4a]" />
                    <span className="ml-[11px]">{name}</span>
                  </li>
                ))}
              </ul>
            </div>
          </section>
        </div>
        <ScrollBar thumb="h-[429px]" />
      </div>
    </aside>
  );
}

/* ---------- 3D view ---------- */

function SketchView() {
  const dim = "#ff5050";
  return (
    <svg className="h-full w-full" viewBox="0 0 1454 554" preserveAspectRatio="xMidYMid slice" fill="none" role="img" aria-label="スケッチ">
      <path d="M0 277h1454" stroke="#cc6060" strokeWidth={2} />
      <path d="M727 0v554" stroke="#7cf57c" strokeWidth={2} />
      <g transform="translate(594 134) scale(0.33333)" strokeWidth={6}>
        <path d="M234 345h331v168H234z" stroke="#76b81c" />
        <path d="M384 420l6 4v16l-6 4M416 420l-6 4v16l6 4" stroke={dim} strokeWidth={5} />
        <g fill="#76b81c">
          <circle cx={232} cy={346} r={13} />
          <circle cx={565} cy={346} r={13} />
          <circle cx={232} cy={511} r={13} />
          <circle cx={565} cy={511} r={13} />
          <circle cx={400} cy={431} r={14} />
        </g>
        <path d="M234 345V60M564 345V60M234 168h330M565 345h461M565 513h461M918 352v20M918 441v72" stroke={dim} />
        <path d="M236 168l28-9v18zM562 168l-28-9v18zM918 350l-9 26h18zM918 510l-9-28h18z" fill={dim} />
        <path d="M384 390h30M384 471h30M273 417v30M522 417v30" stroke={dim} strokeWidth={5} />
        <path d="M244 352l56 28M264 381h38M302 381l-24-33M555 507l-56-28M534 477h-38M496 477l24 33" stroke={dim} strokeWidth={5} />
      </g>
      <g fill={dim} className="font-['Liberation_Sans',sans-serif] text-[17px]">
        <text x={669} y={194} textAnchor="end">20 mm</text>
        <text transform="translate(904 274) rotate(-90)">10 mm</text>
      </g>
    </svg>
  );
}

function NavigationCube() {
  return (
    <svg className="absolute top-0 right-0 h-[154px] w-[180px]" viewBox="0 18 540 462" role="img" aria-label="ナビゲーションキューブ">
      <g fill="#6b6c6e" stroke="#1c1c1c" strokeWidth={2.5}>
        <path d="M324 38l35 38h-70zM324 431l35-39h-70zM127 234l39-35v70zM521 234l-39-35v70z" />
        <path d="M270 58c-26 4-54 20-72 40l-12-2-9 43 38-15-9-8c18-18 42-34 66-40z" />
        <path d="M378 58c26 4 54 20 72 40l12-2 9 43-38-15 9-8c-18-18-42-34-66-40z" />
        <circle cx={495} cy={62} r={20} />
        <path d="M253 139h142l24 24v142l-24 24H253l-24-24V163z" />
        <path d="M428 356l30-10 30 13v33l-30 12-30-13zM428 356l30 11 30-8M458 367v37" />
        <path d="M274 163h100l21 21v99l-21 21H274l-21-21v-99zM274 139v24M374 139v24M274 304v25M374 304v25M229 184h24M229 283h24M395 184h24M395 283h24" />
      </g>
      <text x={323} y={279} textAnchor="middle" fill="#323234" className="font-['Noto_Sans_CJK_JP',sans-serif] text-[124px]">右</text>
      <path d="M220 184v150" stroke="#1c1ca8" strokeWidth={7} />
      <path d="M224 338h150" stroke="#1d9c1d" strokeWidth={7} />
      <path d="M216 333h9v9h-9z" fill="#d81010" />
    </svg>
  );
}

function AxisCross() {
  return (
    <svg className="absolute right-0 bottom-[22px] h-10 w-8" viewBox="0 -8 32 40" role="img" aria-label="座標軸">
      <path d="M4.5 27V12" stroke="#20207a" />
      <path d="M4.5 8l2.5 6H2z" fill="#20207a" />
      <path d="M5 26.5h14" stroke="#1d8a1d" />
      <path d="M23 26.5L17 24v5z" fill="#1d8a1d" />
      <path d="M4.5 24l3 3-3 3-3-3z" fill="#8a2020" />
      <g className="font-['Liberation_Sans',sans-serif] text-[10px] font-bold">
        <text x={5} y={7}>Z</text>
        <text x={5} y={25}>X</text>
        <text x={24} y={25}>Y</text>
      </g>
    </svg>
  );
}

function CloseMark() {
  return (
    <svg className="size-3" viewBox="0 0 12 12" fill="none" stroke="#979797" strokeWidth={2.5} aria-hidden="true">
      <path d="M1 1l10 10M11 1L1 11" />
    </svg>
  );
}

function Workspace() {
  return (
    <main className="flex min-w-0 grow flex-col">
      <div className="relative h-[554px] bg-[#3b3b3b]">
        <SketchView />
        <NavigationCube />
        <AxisCross />
      </div>
      <div className="flex h-[33px] items-start bg-[#333]">
        <div className="flex h-[30px] w-[90px] items-center rounded-b-[3px] border border-[#202020] bg-[#272727] pl-[5px] text-[#b0b0b0]">
          <svg className="size-4" viewBox="0 0 16 16" aria-hidden="true">
            <path d="M2 0h12v6l-4 9H0V3z" fill="#d8303a" />
            <path d="M8 7h6l1 4-2 4H8z" fill="#3d86d8" />
            <path d="M4 3h8v3H7v2h3v3H7v3H4z" fill="#fff" />
          </svg>
          <button className="ml-[9px]">開始</button>
          <button aria-label="開始を閉じる" className="ml-[14px]"><CloseMark /></button>
        </div>
        <div className="flex h-[33px] w-[156px] items-center rounded-b-[3px] border border-t-0 border-[#202020] bg-[#3b3b3b] pl-[6px]">
          <svg className="h-[15px] w-3" viewBox="0 0 12 15" aria-hidden="true">
            <path d="M0 0h9l3 3v12H0z" fill="#f2f2f2" />
            <path d="M5 3h5v5H5z" fill="#d42020" />
            <path d="M2 6l3-1 3 1v5l-3 2-3-2z" fill="#2c5a98" />
          </svg>
          <button className="ml-3">名称未設定 : 1*</button>
          <button aria-label="名称未設定を閉じる" className="ml-[14px]"><CloseMark /></button>
        </div>
      </div>
    </main>
  );
}

/* ---------- report view and status bar ---------- */

const log = ["18:38:08", "18:41:57", "18:45:28"];

function ReportView() {
  return (
    <section className="flex grow flex-col">
      <div className="flex h-[21px] shrink-0 items-end bg-[#333] pr-[3px]">
        <h2 className="grow pb-px pl-1 text-center leading-[15px]">レポートビュー</h2>
        <div className="pb-[3px]"><FloatButtons close /></div>
      </div>
      <div className="grow bg-[#444] px-1 pt-1 font-['DejaVu_Sans_Mono',monospace] text-[13px] leading-[17px] text-[#ff7a5c]">
        {log.map((time) => (
          <p key={time} className="whitespace-pre">{`${time}  QGraphicsView::dragLeaveEvent: drag leave received before drag enter`}</p>
        ))}
      </div>
    </section>
  );
}

function StatusBar() {
  return (
    <footer className="flex h-[31px] items-center bg-[#333] pr-px pl-[2px]">
      <p className="grow">Preselected: Unnamed.Body.Sketch.V_Axis (2.00 µm, 0.00 mm, 9.57 mm)</p>
      <button className="flex h-[26px] w-[90px] items-center rounded-[3px] border border-black bg-gradient-to-b from-[#444] to-[#2d2d2d] pr-[2px] pl-px">
        <svg className="size-[14px]" viewBox="0 0 14 14" aria-hidden="true">
          <path d="M0 1h14v12H0z" fill="#e4cc22" />
          <path d="M0 1l7 6 7-6M0 13l5-6M14 13L9 7" fill="none" stroke="#c9b014" />
        </svg>
        <span className="ml-[5px] grow text-left">1</span>
        <Triangle className="text-[#bdbdbd]" />
      </button>
      <button className="ml-[6px] flex h-[26px] w-24 items-center rounded-[3px] border border-black bg-gradient-to-b from-[#444] to-[#2d2d2d] pr-[2px] pl-[13px]">
        <svg className="h-[14px] w-[10px]" viewBox="0 0 10 14" fill="none" stroke="#2a2c2e" strokeWidth={1.5} aria-hidden="true">
          <rect x={1} y={1} width={8} height={12} rx={3} />
          <path d="M5 1v5M3 6h4" />
        </svg>
        <span className="ml-[5px] grow text-left">Blender</span>
        <Triangle className="text-[#bdbdbd]" />
      </button>
      <button className="ml-[6px] flex h-[23px] w-[148px] items-center justify-between rounded-[3px] border border-black bg-gradient-to-b from-[#3c3c3c] to-[#2a2a2a] pr-[2px] pl-1 whitespace-nowrap">
        262.45 mm x 100.00 mm
        <Triangle className="text-[#bdbdbd]" />
      </button>
    </footer>
  );
}

export default function App() {
  return (
    <div className="flex min-h-screen flex-col bg-[#333] font-['Noto_Sans_Mono_CJK_JP','DejaVu_Sans_Mono','Noto_Sans_CJK_JP',monospace] text-[12px] leading-[18px] text-[#ececec]">
      <DesktopPanel />
      <TitleBar />
      <MenuBar />
      <div className="bg-[#323232]">
        <FileToolbar />
        <ViewToolbar />
        <GeometryToolbar />
        <EditToolbar />
      </div>
      <div className="flex h-[587px]">
        <TaskPanel />
        <Workspace />
      </div>
      <ReportView />
      <StatusBar />
    </div>
  );
}
